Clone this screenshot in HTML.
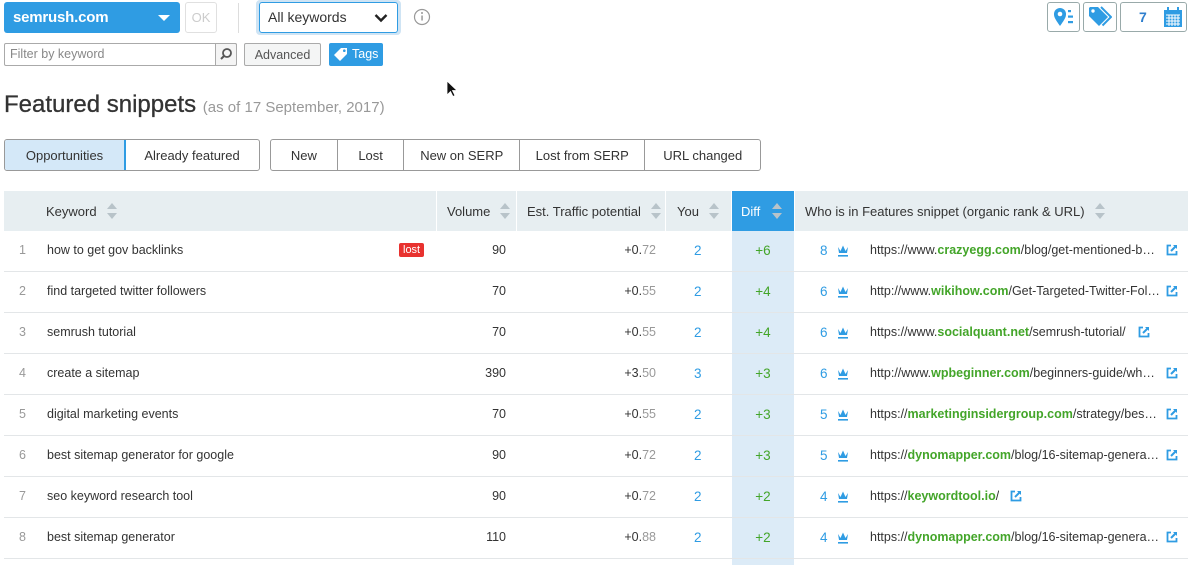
<!DOCTYPE html>
<html><head><meta charset="utf-8"><style>
*{box-sizing:border-box;margin:0;padding:0}
body{width:1190px;height:565px;overflow:hidden;background:#fff;font-family:"Liberation Sans",sans-serif;color:#333;position:relative;font-size:13px}
.a{position:absolute}
.btn{position:absolute;border:1px solid #aaa;border-radius:3px;display:flex;align-items:center;justify-content:center;font-size:13px;color:#333}
.seg{position:absolute;display:flex;border:1px solid #999;border-radius:3px;height:32px;top:139px;overflow:hidden}
.seg div{display:flex;align-items:center;justify-content:center;border-right:1px solid #999;font-size:13px;color:#333;height:100%}
.seg div:last-child{border-right:none}
.hdr{position:absolute;top:191px;height:40px;background:#e7eef1;display:flex;align-items:center;font-size:13px;color:#333}
.sort{display:inline-block;width:9px;height:16px;margin-left:10px;vertical-align:middle;position:relative}
.sort:before{content:"";position:absolute;top:0;left:0;border:5px solid transparent;border-top:none;border-bottom:6px solid #b8c3c9}
.sort:after{content:"";position:absolute;bottom:0;left:0;border:5px solid transparent;border-bottom:none;border-top:6px solid #b8c3c9}
.row{position:absolute;left:4px;width:1184px;height:41px;border-bottom:1px solid #e3e6e8;font-size:12.5px}
.row span{position:absolute;top:12px;white-space:nowrap}
.n{left:15px;color:#999}
.k{left:43px}
.v{right:682px;text-align:right}
.t{right:532px}
.t i{font-style:normal;color:#999}
.y{left:690px;color:#2f9ce3;font-size:13.5px}
.d{left:728px;width:62px;text-align:center;color:#43a529;font-size:13.5px}
.r{left:816px;color:#2f9ce3;font-size:13.5px}
.u{left:866px;max-width:290px;overflow:hidden;text-overflow:ellipsis;color:#333}
.u b{color:#43a529;font-weight:bold}
.row svg{position:absolute}
.cr{left:833px;top:13px}
.lk{left:1162px;top:13px}
</style></head><body>

<div class="a" style="left:4px;top:2px;width:176px;height:31px;background:#2f9ce3;border-radius:3px;color:#fff;font-size:15px;line-height:31px;padding-left:9px;font-weight:bold;letter-spacing:-.2px">semrush.com<div class="a" style="right:10px;top:13px;border:6px solid transparent;border-top:6px solid #fff;border-bottom:none"></div></div>
<div class="btn" style="left:185px;top:2px;width:32px;height:31px;border-color:#e0e0e0;color:#ccc;font-size:13px">OK</div>
<div class="a" style="left:238px;top:3px;width:1px;height:30px;background:#ddd"></div>
<div class="a" style="left:256px;top:0;width:145px;height:35px;border:3px solid #cfe4f4;border-radius:4px"></div>
<div class="a" style="left:259px;top:2px;width:139px;height:31px;border:1px solid #2f9ce3;border-radius:3px;font-size:14px;line-height:29px;padding-left:8px">All keywords
<svg class="a" style="right:9px;top:10px" width="14" height="10" viewBox="0 0 14 10"><path d="M1.5 2l5.5 5.5L12.5 2" stroke="#222" stroke-width="2.4" fill="none"/></svg></div>
<svg class="a" style="left:413px;top:8px" width="18" height="18"><circle cx="9" cy="9" r="7.5" stroke="#999" fill="none" stroke-width="1.2"/><rect x="8.3" y="7.5" width="1.5" height="5" fill="#999"/><circle cx="9" cy="5" r="1" fill="#999"/></svg>

<div class="a" style="left:4px;top:43px;width:233px;height:23px;border:1px solid #aaa;border-radius:2px;font-size:12.5px;color:#888;line-height:21px;padding-left:5px">Filter by keyword</div>
<div class="a" style="left:215px;top:43px;width:22px;height:23px;border:1px solid #aaa;background:#f4f4f4;border-radius:0 2px 2px 0"><svg width="20" height="21"><circle cx="11" cy="9" r="4" stroke="#555" stroke-width="1.8" fill="none"/><path d="M8 12l-3 3" stroke="#555" stroke-width="2"/></svg></div>
<div class="btn" style="left:244px;top:43px;width:77px;height:23px;background:#f4f5f5;font-size:12.5px;color:#555;border-radius:2px">Advanced</div>
<div class="a" style="left:329px;top:43px;width:54px;height:23px;background:#2f9ce3;border-radius:2px;color:#fff;font-size:12.5px;line-height:23px;padding-left:23px">Tags
<svg class="a" style="left:4px;top:4px" width="16" height="15" viewBox="0 0 16 15"><path d="M1 8L8 1h6v6l-7 7z" fill="#fff"/><circle cx="11.3" cy="3.7" r="1.3" fill="#2f9ce3"/></svg></div>

<div class="btn" style="left:1047px;top:2px;width:33px;height:30px;border-color:#9aa"><svg width="22" height="20" viewBox="0 0 22 20"><path d="M7 19C2 12 1 10 1 7a6 6 0 0 1 12 0c0 3-1 5-6 12z" fill="#2f9ce3"/><circle cx="7" cy="7" r="2.3" fill="#fff"/><rect x="15" y="3" width="3" height="2.2" fill="#2f9ce3"/><rect x="15" y="8.5" width="5" height="2.2" fill="#2f9ce3"/><rect x="15" y="14" width="5" height="2.2" fill="#2f9ce3"/></svg></div>
<div class="btn" style="left:1083px;top:2px;width:34px;height:30px;border-color:#9aa"><svg width="24" height="22" viewBox="0 0 24 22"><path d="M1 2v8l10 10 9-9L10 1H2z" fill="#2f9ce3"/><circle cx="5" cy="5" r="1.7" fill="#fff"/><path d="M13 1l10 10-8.5 8.5" stroke="#2f9ce3" stroke-width="2" fill="none"/></svg></div>
<div class="btn" style="left:1120px;top:2px;width:67px;height:30px;border-color:#9aa;justify-content:flex-start;padding-left:18px;color:#2f7fce;font-weight:bold;font-size:14px">7
<svg class="a" style="left:42px;top:4px" width="20" height="21" viewBox="0 0 20 21"><rect x="1" y="3" width="18" height="17" fill="#2f9ce3"/><rect x="4" y="0" width="2" height="5" fill="#2f9ce3"/><rect x="14" y="0" width="2" height="5" fill="#2f9ce3"/><path d="M3 8h14M3 11h14M3 14h14M3 17h14M6 8v11M9 8v11M12 8v11M15 8v11" stroke="#fff" stroke-width="1"/></svg></div>

<svg class="a" style="left:446px;top:80px" width="12" height="18"><path d="M1 1v14l3.5-3.5 2.5 5 2-1-2.5-5H11z" fill="#111" stroke="#fff" stroke-width=".8"/></svg>

<div class="a" style="left:4px;top:91px;font-size:24px;color:#333;white-space:nowrap;-webkit-text-stroke:.3px #333">Featured snippets <span style="font-size:15px;color:#999;-webkit-text-stroke:0">(as of 17 September, 2017)</span></div>

<div class="seg" style="left:4px;width:256px"><div style="width:121px;background:#d4e8f8;border-right:1px solid #2f9ce3;outline:1px solid #2f9ce3">Opportunities</div><div style="width:135px">Already featured</div></div>
<div class="seg" style="left:270px;width:491px"><div style="width:67px">New</div><div style="width:67px">Lost</div><div style="width:116px">New on SERP</div><div style="width:126px">Lost from SERP</div><div style="width:115px">URL changed</div></div>

<div class="hdr" style="left:4px;width:432px;padding-left:42px">Keyword<span class="sort"></span></div>
<div class="hdr" style="left:437px;width:79px;padding-left:10px">Volume<span class="sort"></span></div>
<div class="hdr" style="left:517px;width:148px;padding-left:10px">Est. Traffic potential<span class="sort"></span></div>
<div class="hdr" style="left:666px;width:65px;padding-left:11px">You<span class="sort"></span></div>
<div class="hdr" style="left:732px;width:62px;padding-left:9px;background:#2f9ce3;color:#fff">Diff<span class="sort" style="margin-left:12px"></span></div>
<div class="hdr" style="left:795px;width:393px;padding-left:10px">Who is in Features snippet (organic rank &amp; URL)<span class="sort"></span></div>
<div class="a" style="left:732px;top:231px;width:62px;height:334px;background:#dcebf7"></div>

<svg width="0" height="0" style="position:absolute"><defs>
<symbol id="crown" viewBox="0 0 12 13"><path d="M1 3l2.5 4L6 1.5 8.5 7 11 3l-1 6H2z" fill="#2f9ce3"/><rect x="1" y="11" width="10" height="1.6" fill="#2f9ce3"/></symbol>
<symbol id="ext" viewBox="0 0 12 12"><path d="M5 1.5H1.5v9h9V7" stroke="#2f9ce3" stroke-width="1.8" fill="none"/><path d="M7 1h4v4z" fill="#2f9ce3"/><path d="M10 2L5 7" stroke="#2f9ce3" stroke-width="2"/></symbol>
</defs></svg>

<div class="row" style="top:231px"><span class="n">1</span><span class="k">how to get gov backlinks</span><span style="left:395px;top:12px;background:#e8322f;color:#fff;font-size:11px;padding:1px 4px;border-radius:2px">lost</span><span class="v">90</span><span class="t">+0.<i>72</i></span><span class="y">2</span><span class="d">+6</span><span class="r">8</span><svg class="cr" width="12" height="13"><use href="#crown"/></svg><span class="u">https://www.<b>crazyegg.com</b>/blog/get-mentioned-backlinks</span><svg class="lk" width="12" height="12"><use href="#ext"/></svg></div>
<div class="row" style="top:272px"><span class="n">2</span><span class="k">find targeted twitter followers</span><span class="v">70</span><span class="t">+0.<i>55</i></span><span class="y">2</span><span class="d">+4</span><span class="r">6</span><svg class="cr" width="12" height="13"><use href="#crown"/></svg><span class="u">http://www.<b>wikihow.com</b>/Get-Targeted-Twitter-Followers</span><svg class="lk" width="12" height="12"><use href="#ext"/></svg></div>
<div class="row" style="top:313px"><span class="n">3</span><span class="k">semrush tutorial</span><span class="v">70</span><span class="t">+0.<i>55</i></span><span class="y">2</span><span class="d">+4</span><span class="r">6</span><svg class="cr" width="12" height="13"><use href="#crown"/></svg><span class="u">https://www.<b>socialquant.net</b>/semrush-tutorial/</span><svg class="lk" style="left:1134px" width="12" height="12"><use href="#ext"/></svg></div>
<div class="row" style="top:354px"><span class="n">4</span><span class="k">create a sitemap</span><span class="v">390</span><span class="t">+3.<i>50</i></span><span class="y">3</span><span class="d">+3</span><span class="r">6</span><svg class="cr" width="12" height="13"><use href="#crown"/></svg><span class="u">http://www.<b>wpbeginner.com</b>/beginners-guide/what-is</span><svg class="lk" width="12" height="12"><use href="#ext"/></svg></div>
<div class="row" style="top:395px"><span class="n">5</span><span class="k">digital marketing events</span><span class="v">70</span><span class="t">+0.<i>55</i></span><span class="y">2</span><span class="d">+3</span><span class="r">5</span><svg class="cr" width="12" height="13"><use href="#crown"/></svg><span class="u">https://<b>marketinginsidergroup.com</b>/strategy/best-events</span><svg class="lk" width="12" height="12"><use href="#ext"/></svg></div>
<div class="row" style="top:436px"><span class="n">6</span><span class="k">best sitemap generator for google</span><span class="v">90</span><span class="t">+0.<i>72</i></span><span class="y">2</span><span class="d">+3</span><span class="r">5</span><svg class="cr" width="12" height="13"><use href="#crown"/></svg><span class="u">https://<b>dynomapper.com</b>/blog/16-sitemap-generators</span><svg class="lk" width="12" height="12"><use href="#ext"/></svg></div>
<div class="row" style="top:477px"><span class="n">7</span><span class="k">seo keyword research tool</span><span class="v">90</span><span class="t">+0.<i>72</i></span><span class="y">2</span><span class="d">+2</span><span class="r">4</span><svg class="cr" width="12" height="13"><use href="#crown"/></svg><span class="u">https://<b>keywordtool.io</b>/</span><svg class="lk" style="left:1006px" width="12" height="12"><use href="#ext"/></svg></div>
<div class="row" style="top:518px"><span class="n">8</span><span class="k">best sitemap generator</span><span class="v">110</span><span class="t">+0.<i>88</i></span><span class="y">2</span><span class="d">+2</span><span class="r">4</span><svg class="cr" width="12" height="13"><use href="#crown"/></svg><span class="u">https://<b>dynomapper.com</b>/blog/16-sitemap-generators</span><svg class="lk" width="12" height="12"><use href="#ext"/></svg></div>
</body></html>
